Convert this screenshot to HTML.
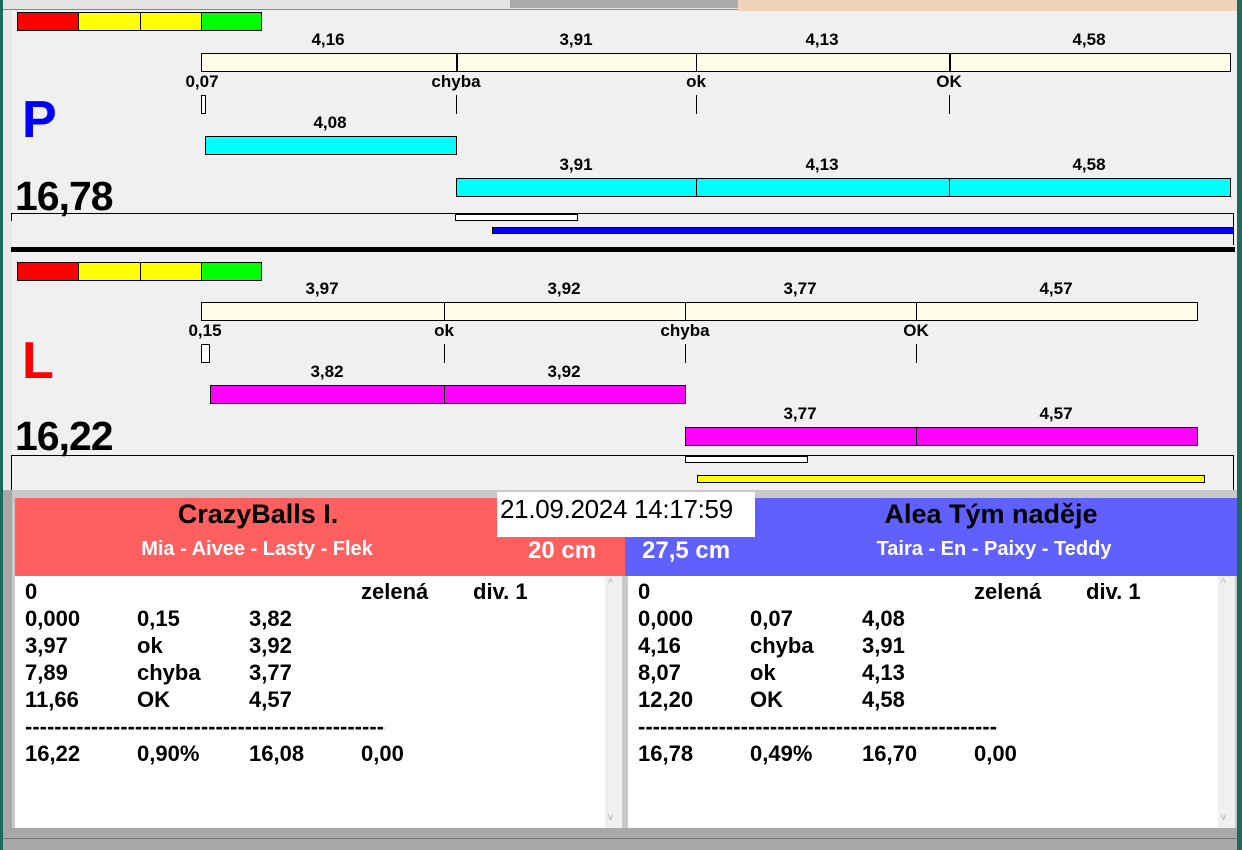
<!DOCTYPE html>
<html><head><meta charset="utf-8"><style>
*{margin:0;padding:0;box-sizing:border-box}
body{width:1242px;height:850px;position:relative;overflow:hidden;background:#f0f0f0;font-family:"Liberation Sans",Arial,sans-serif}
div{position:absolute}
.b{border:1px solid #000}
.t{font-weight:bold;font-size:17px;color:#000;transform:translateX(-50%);white-space:nowrap;line-height:16px}
.v{width:1px;background:#000}
.r{font-weight:bold;font-size:22px;line-height:27px;white-space:nowrap}
</style></head><body>
<div style="left:0;top:0;width:3px;height:850px;background:#1d6b5b"></div>
<div style="left:1237px;top:0;width:5px;height:850px;background:#1d6b5b"></div>
<div style="left:3px;top:0;width:735px;height:10px;background:#e4e4e4;border-bottom:1px solid #888"></div>
<div style="left:510px;top:0;width:228px;height:8px;background:#aaa"></div>
<div style="left:738px;top:0;width:499px;height:11px;background:#efd3b8"></div>
<div style="left:3px;top:10px;width:9px;height:480px;background:#e8e8e8"></div>

<!-- P section -->
<div class="b" style="left:17px;top:12px;width:62px;height:19px;background:#f00"></div>
<div class="b" style="left:78px;top:12px;width:63px;height:19px;background:#ff0"></div>
<div class="b" style="left:140px;top:12px;width:62px;height:19px;background:#ff0"></div>
<div class="b" style="left:201px;top:12px;width:61px;height:19px;background:#0f0"></div>
<div class="t" style="left:328px;top:32px">4,16</div>
<div class="t" style="left:576px;top:32px">3,91</div>
<div class="t" style="left:822px;top:32px">4,13</div>
<div class="t" style="left:1089px;top:32px">4,58</div>
<div class="b" style="left:201px;top:53px;width:1030px;height:19px;background:#fffde8"></div>
<div class="v" style="left:456px;top:53px;height:19px;width:2px"></div>
<div class="v" style="left:696px;top:53px;height:19px"></div>
<div class="v" style="left:949px;top:53px;height:19px;width:2px"></div>
<div class="t" style="left:202px;top:74px">0,07</div>
<div class="t" style="left:456px;top:74px">chyba</div>
<div class="t" style="left:696px;top:74px">ok</div>
<div class="t" style="left:949px;top:74px">OK</div>
<div class="b" style="left:201px;top:95px;width:5px;height:19px;background:#fff"></div>
<div class="v" style="left:456px;top:95px;height:19px"></div>
<div class="v" style="left:696px;top:95px;height:19px"></div>
<div class="v" style="left:949px;top:95px;height:19px"></div>
<div style="left:22px;top:90px;font-size:52px;font-weight:bold;color:#0000ff;line-height:60px">P</div>
<div class="t" style="left:330px;top:115px">4,08</div>
<div class="b" style="left:205px;top:136px;width:252px;height:19px;background:#0ff"></div>
<div class="t" style="left:576px;top:157px">3,91</div>
<div class="t" style="left:822px;top:157px">4,13</div>
<div class="t" style="left:1089px;top:157px">4,58</div>
<div class="b" style="left:456px;top:178px;width:775px;height:19px;background:#0ff"></div>
<div class="v" style="left:696px;top:178px;height:19px"></div>
<div class="v" style="left:949px;top:178px;height:19px"></div>
<div style="left:15px;top:174px;font-size:41px;font-weight:bold;line-height:44px;letter-spacing:-1px">16,78</div>
<div style="left:11px;top:213px;width:1223px;height:1px;background:#000"></div>
<div class="v" style="left:11px;top:213px;height:8px"></div>
<div class="v" style="left:1233px;top:213px;height:32px"></div>
<div class="b" style="left:455px;top:214px;width:123px;height:7px;background:#fff"></div>
<div class="b" style="left:492px;top:227px;width:742px;height:7px;background:#0000ee"></div>
<div style="left:11px;top:247px;width:1224px;height:5px;background:#000"></div>

<!-- L section -->
<div class="b" style="left:17px;top:262px;width:62px;height:19px;background:#f00"></div>
<div class="b" style="left:78px;top:262px;width:63px;height:19px;background:#ff0"></div>
<div class="b" style="left:140px;top:262px;width:62px;height:19px;background:#ff0"></div>
<div class="b" style="left:201px;top:262px;width:61px;height:19px;background:#0f0"></div>
<div class="t" style="left:322px;top:281px">3,97</div>
<div class="t" style="left:564px;top:281px">3,92</div>
<div class="t" style="left:800px;top:281px">3,77</div>
<div class="t" style="left:1056px;top:281px">4,57</div>
<div class="b" style="left:201px;top:302px;width:997px;height:19px;background:#fffde8"></div>
<div class="v" style="left:444px;top:302px;height:19px"></div>
<div class="v" style="left:685px;top:302px;height:19px"></div>
<div class="v" style="left:916px;top:302px;height:19px"></div>
<div class="t" style="left:205px;top:323px">0,15</div>
<div class="t" style="left:444px;top:323px">ok</div>
<div class="t" style="left:685px;top:323px">chyba</div>
<div class="t" style="left:916px;top:323px">OK</div>
<div class="b" style="left:201px;top:344px;width:9px;height:19px;background:#fff"></div>
<div class="v" style="left:444px;top:344px;height:19px"></div>
<div class="v" style="left:685px;top:344px;height:19px"></div>
<div class="v" style="left:916px;top:344px;height:19px"></div>
<div style="left:22px;top:331px;font-size:52px;font-weight:bold;color:#f00;line-height:60px">L</div>
<div class="t" style="left:327px;top:364px">3,82</div>
<div class="t" style="left:564px;top:364px">3,92</div>
<div class="b" style="left:210px;top:385px;width:476px;height:19px;background:#f0f"></div>
<div class="v" style="left:444px;top:385px;height:19px"></div>
<div class="t" style="left:800px;top:406px">3,77</div>
<div class="t" style="left:1056px;top:406px">4,57</div>
<div class="b" style="left:685px;top:427px;width:513px;height:19px;background:#f0f"></div>
<div class="v" style="left:916px;top:427px;height:19px"></div>
<div style="left:15px;top:414px;font-size:41px;font-weight:bold;line-height:44px;letter-spacing:-1px">16,22</div>
<div style="left:11px;top:455px;width:1223px;height:1px;background:#000"></div>
<div class="v" style="left:11px;top:455px;height:35px"></div>
<div class="v" style="left:1233px;top:455px;height:35px"></div>
<div class="b" style="left:685px;top:456px;width:123px;height:7px;background:#fff"></div>
<div class="b" style="left:697px;top:475px;width:508px;height:8px;background:#ff0"></div>

<!-- bottom -->
<div style="left:3px;top:490px;width:1234px;height:360px;background:#a8a8a8"></div>
<div style="left:12px;top:490px;width:1225px;height:338px;background:#c8c8c8"></div>
<div style="left:15px;top:498px;width:610px;height:78px;background:#ff5f5f"></div>
<div style="left:625px;top:498px;width:612px;height:78px;background:#6060ff"></div>
<div style="left:497px;top:492px;width:258px;height:45px;background:#fff"></div>
<div style="left:500px;top:494px;font-size:26px;line-height:30px;letter-spacing:-0.3px">21.09.2024 14:17:59</div>
<div style="left:258px;top:499px;font-size:27px;font-weight:bold;transform:translateX(-50%);white-space:nowrap;line-height:30px">CrazyBalls I.</div>
<div style="left:257px;top:538px;font-size:20px;font-weight:bold;color:#fff;transform:translateX(-50%);white-space:nowrap;line-height:22px">Mia - Aivee - Lasty - Flek</div>
<div style="left:528px;top:537px;font-size:24px;font-weight:bold;color:#fff;line-height:28px">20 cm</div>
<div style="left:991px;top:499px;font-size:27px;font-weight:bold;transform:translateX(-50%);white-space:nowrap;line-height:30px">Alea Tým naděje</div>
<div style="left:994px;top:538px;font-size:20px;font-weight:bold;color:#fff;transform:translateX(-50%);white-space:nowrap;line-height:22px">Taira - En - Paixy - Teddy</div>
<div style="left:642px;top:537px;font-size:24px;font-weight:bold;color:#fff;line-height:28px">27,5 cm</div>

<div style="left:15px;top:576px;width:590px;height:252px;background:#fff"></div>
<div style="left:605px;top:576px;width:17px;height:252px;background:#f0f0f0"></div>
<div style="left:628px;top:576px;width:590px;height:252px;background:#fff"></div>
<div style="left:1218px;top:576px;width:17px;height:252px;background:#f0f0f0"></div>
<div style="left:608px;top:578px;font-size:10px;color:#aaa">^</div>
<div style="left:608px;top:812px;font-size:10px;color:#aaa">v</div>
<div style="left:1221px;top:578px;font-size:10px;color:#aaa">^</div>
<div style="left:1221px;top:812px;font-size:10px;color:#aaa">v</div>

<div class="r" style="left:25px;top:578px">0</div>
<div class="r" style="left:361px;top:578px">zelená</div>
<div class="r" style="left:473px;top:578px">div. 1</div>
<div class="r" style="left:25px;top:605px">0,000<br>3,97<br>7,89<br>11,66</div>
<div class="r" style="left:137px;top:605px">0,15<br>ok<br>chyba<br>OK</div>
<div class="r" style="left:249px;top:605px">3,82<br>3,92<br>3,77<br>4,57</div>
<div class="r" style="left:25px;top:713px;width:360px;overflow:hidden">------------------------------------------------------------</div>
<div class="r" style="left:25px;top:740px">16,22</div>
<div class="r" style="left:137px;top:740px">0,90%</div>
<div class="r" style="left:249px;top:740px">16,08</div>
<div class="r" style="left:361px;top:740px">0,00</div>

<div class="r" style="left:638px;top:578px">0</div>
<div class="r" style="left:974px;top:578px">zelená</div>
<div class="r" style="left:1086px;top:578px">div. 1</div>
<div class="r" style="left:638px;top:605px">0,000<br>4,16<br>8,07<br>12,20</div>
<div class="r" style="left:750px;top:605px">0,07<br>chyba<br>ok<br>OK</div>
<div class="r" style="left:862px;top:605px">4,08<br>3,91<br>4,13<br>4,58</div>
<div class="r" style="left:638px;top:713px;width:360px;overflow:hidden">------------------------------------------------------------</div>
<div class="r" style="left:638px;top:740px">16,78</div>
<div class="r" style="left:750px;top:740px">0,49%</div>
<div class="r" style="left:862px;top:740px">16,70</div>
<div class="r" style="left:974px;top:740px">0,00</div>
<div style="left:3px;top:838px;width:1234px;height:1px;background:#777"></div>
</body></html>
